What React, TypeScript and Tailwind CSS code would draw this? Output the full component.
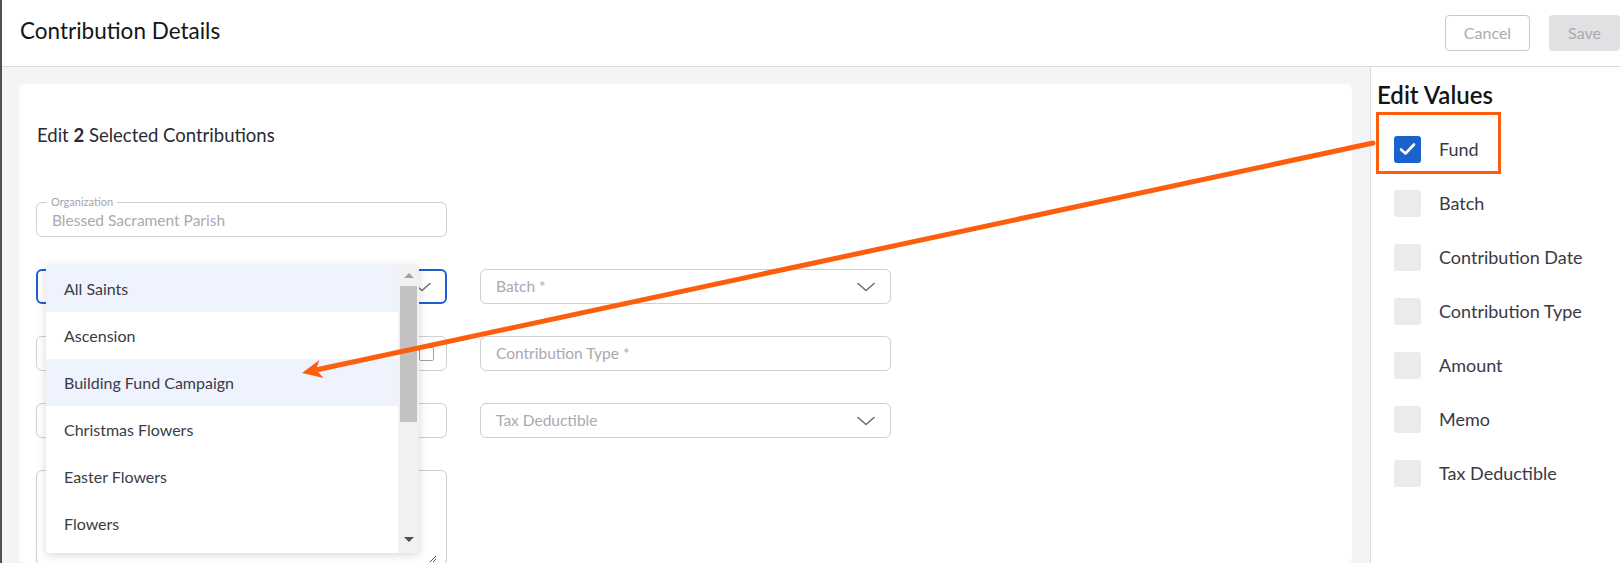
import React from 'react';

const funds = ['All Saints', 'Ascension', 'Building Fund Campaign', 'Christmas Flowers', 'Easter Flowers', 'Flowers'];
const highlighted = ['All Saints', 'Building Fund Campaign'];
const editFields = ['Fund', 'Batch', 'Contribution Date', 'Contribution Type', 'Amount', 'Memo', 'Tax Deductible'];

const Chevron = () => (
  <svg width="18" height="10" viewBox="0 0 18 10" fill="none" stroke="#6e6e78" strokeWidth="1.6" strokeLinecap="round" strokeLinejoin="round">
    <polyline points="1,1.5 9,8.5 17,1.5" />
  </svg>
);

const SelectBox = ({ placeholder }: { placeholder: string }) => (
  <div className="h-[35px] rounded-md border border-[#cfcfd4] flex items-center justify-between pl-[15px] pr-[15px]">
    <span className="text-[15.5px] text-[#a9a9b2]">{placeholder}</span>
    <Chevron />
  </div>
);

const FundDropdown = () => (
  <div className="absolute left-[10px] top-[-4px] w-[373px] h-[288px] z-10 flex bg-white rounded-[3px] overflow-hidden shadow-[0_2px_10px_rgba(0,0,0,0.16)]">
    <ul className="flex-1">
      {funds.map((f) => (
        <li
          key={f}
          className={`h-[47px] flex items-center pl-[18px] text-[16px] text-[#3b3b46] ${highlighted.includes(f) ? 'bg-[#eef3fd]' : 'bg-white'}`}
        >
          {f}
        </li>
      ))}
    </ul>
    <div className="w-[21px] bg-[#f1f1f1] flex flex-col items-center">
      <div className="h-[21px] flex items-center justify-center">
        <div className="w-0 h-0 border-x-[5px] border-x-transparent border-b-[5px] border-b-[#a3a3a3]" />
      </div>
      <div className="w-[17px] h-[136px] bg-[#c1c1c1]" />
      <div className="flex-1" />
      <div className="h-[27px] flex items-center justify-center">
        <div className="w-0 h-0 border-x-[5px] border-x-transparent border-t-[5px] border-t-[#505050]" />
      </div>
    </div>
  </div>
);

const App = () => {
  return (
    <div className="relative w-[1620px] h-[563px] overflow-hidden bg-white border-l-2 border-[#505050] flex flex-col font-['Lato',sans-serif]">
      {/* header */}
      <header className="h-[67px] shrink-0 border-b border-[#dadade] flex items-center justify-between pl-[18px]">
        <h1 className="text-[22.5px] text-[#151515] pb-[5px]">Contribution Details</h1>
        <div className="flex items-center gap-[19px]">
          <button className="h-9 w-[85px] rounded border border-[#c9c9cc] text-[16px] text-[#ababae] bg-white">Cancel</button>
          <button className="h-9 w-[71px] rounded bg-[#e1e1e3] text-[16px] text-[#ababae]">Save</button>
        </div>
      </header>

      <div className="flex-1 flex min-h-0">
        {/* form area */}
        <main className="flex-1 bg-[#f4f4f6] pt-[17px] pl-[17px] pr-[18px] min-w-0">
          <div className="bg-white rounded-md h-full pt-[39px] pl-[17px]">
            <p className="text-[18.5px] leading-6 text-[#2a2a33] pl-[1px]">
              Edit <span className="font-bold">2</span> Selected Contributions
            </p>

            <div className="mt-[55px] grid grid-cols-[411px_411px] gap-x-[33px] gap-y-[32px]">
              <div className="relative h-[35px] rounded-md border border-[#cfcfd4] flex items-center pl-[15px] pt-[3px]">
                <span className="absolute -top-[8px] left-[10px] bg-white px-[4px] text-[11px] leading-[14px] text-[#a5a5ad]">Organization</span>
                <span className="text-[15.5px] text-[#a9a9b2]">Blessed Sacrament Parish</span>
              </div>
              <div />

              <div className="relative">
                <div className="h-[35px] rounded-md border-2 border-[#1d5fd1] flex items-center justify-end pr-[14px]">
                  <Chevron />
                </div>
                <FundDropdown />
              </div>
              <SelectBox placeholder="Batch *" />

              <div className="h-[35px] rounded-md border border-[#cfcfd4] flex items-center justify-end pr-[12px]">
                <div className="w-[15px] h-[14px] rounded-[2px] border border-[#a0a0aa]" />
              </div>
              <div className="h-[35px] rounded-md border border-[#cfcfd4] flex items-center pl-[15px]">
                <span className="text-[15.5px] text-[#a9a9b2]">Contribution Type *</span>
              </div>

              <div className="h-[35px] rounded-md border border-[#cfcfd4]" />
              <SelectBox placeholder="Tax Deductible" />

              <div className="relative h-[96px] rounded-md border border-[#cfcfd4]">
                <svg className="absolute right-[9px] bottom-[2px]" width="8" height="8" viewBox="0 0 8 8" stroke="#555" strokeWidth="1">
                  <line x1="7" y1="1" x2="1" y2="7" />
                  <line x1="7" y1="4" x2="4" y2="7" />
                </svg>
              </div>
            </div>
          </div>
        </main>

        {/* right panel */}
        <aside className="relative w-[250px] shrink-0 border-l border-[#dcdcdf] bg-white pt-[13px]">
          <h2 className="pl-[6px] text-[24px] leading-[30px] font-semibold text-[#151515]">Edit Values</h2>
          <ul className="mt-[12px]">
            {editFields.map((f, i) => (
              <li key={f} className="h-[54px] flex items-center pl-[23px]">
                {i === 0 ? (
                  <div className="w-[27px] h-[27px] rounded-[3px] bg-[#1b62cd] flex items-center justify-center">
                    <svg width="17" height="14" viewBox="0 0 17 14" fill="none" stroke="white" strokeWidth="2.6" strokeLinecap="round" strokeLinejoin="round">
                      <polyline points="2,7.5 6.5,11.5 15,2.5" />
                    </svg>
                  </div>
                ) : (
                  <div className="w-[27px] h-[27px] rounded-[3px] bg-[#ebebee]" />
                )}
                <span className="ml-[18px] text-[18px] text-[#3a3a45]">{f}</span>
              </li>
            ))}
          </ul>
          <div className="absolute left-[5px] top-[45px] w-[125px] h-[62px] border-[3px] border-[#fd5e0e]" />
        </aside>
      </div>

      {/* annotation arrow */}
      <svg className="absolute top-0 -left-[2px] w-[1620px] h-[563px] pointer-events-none z-20" viewBox="0 0 1620 563">
        <line x1="1373" y1="143" x2="318" y2="369.5" stroke="#fd5e0e" strokeWidth="5" strokeLinecap="round" />
        <polygon points="302,373 319.5,360 316,369.5 323.5,378" fill="#fd5e0e" />
      </svg>
    </div>
  );
};

export default App;
